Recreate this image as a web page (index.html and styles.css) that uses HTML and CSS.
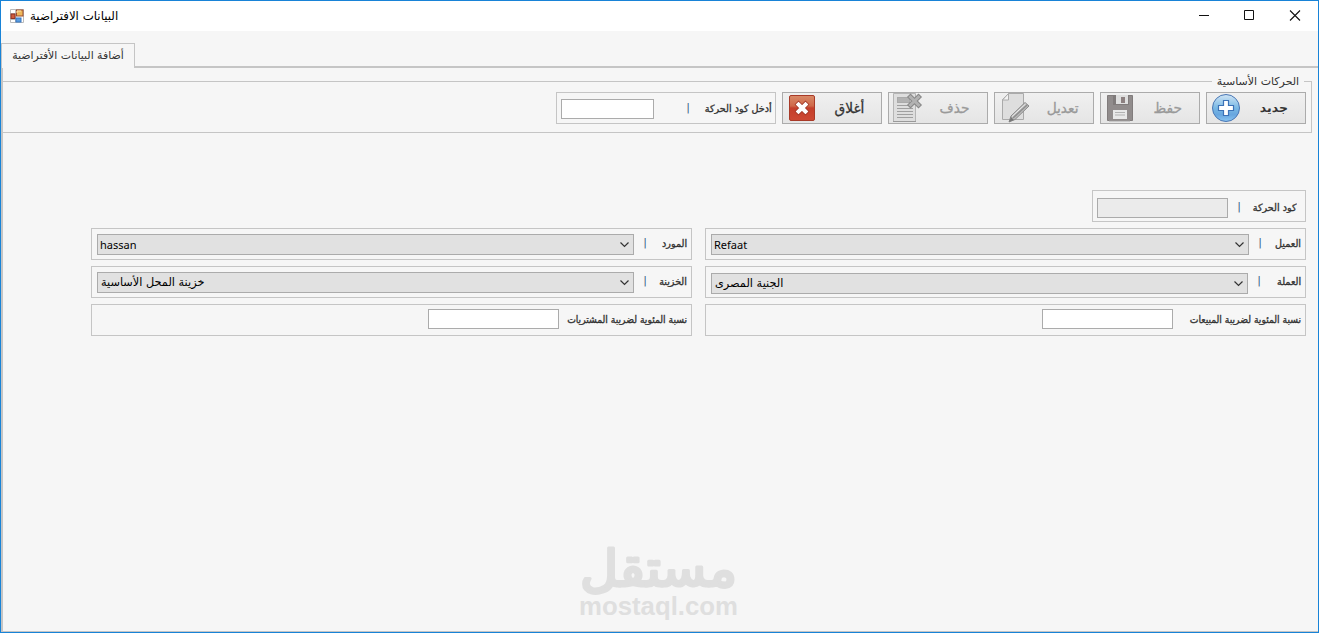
FILE: index.html
```html
<!DOCTYPE html>
<html lang="ar">
  <head>
    <meta charset="utf-8">
    <title>البيانات الافتراضية</title>
    <link rel="stylesheet" href="styles.css">
  </head>
  <body>
    <div class="window">
      <header class="title-bar">
        <svg class="app-icon" width="14" height="14" viewBox="0 0 14 14">
          <path d="M.5 .5h13v13H.5zM5.500 0v14M0 4.500h6M0 10.500h6" fill="#fff" stroke="#bbb"/>
          <rect x="6.500" y="1" width="6.500" height="6" fill="#edb75a" stroke="#9c4b2c"/>
          <path d="M7 4V2h4" fill="none" stroke="#ffe3ae"/>
          <rect x="1" y="5" width="4" height="4.500" fill="#cf5b3c" stroke="#8f3325"/>
          <rect x="6" y="9" width="5" height="4" fill="#5b9de0" stroke="#3976c0"/>
        </svg>
        <span class="window-title" dir="rtl">البيانات الافتراضية</span>
        <svg class="window-buttons" width="102" height="11" viewBox="0 0 102 11">
          <path d="M0 5.500h10M45.500 .5h9v9h-9z" fill="none" stroke="#111"/>
          <path d="M91 .5l10 10M101 .5l-10 10" fill="none" stroke="#111" stroke-width="1.100"/>
        </svg>
      </header>

      <div class="tabs">
        <div class="tab" dir="rtl">أضافة البيانات الأفتراضية</div>
      </div>

      <main class="page">
        <section class="group">
          <span class="group-title" dir="rtl">الحركات الأساسية</span>
          <div class="toolbar">
            <div class="search">
              <input class="search-input" type="text">
              <span class="separator search-separator">|</span>
              <span class="label" dir="rtl">أدخل كود الحركة</span>
            </div>

            <button class="tool-button">
              <svg class="tool-icon" width="32" height="30" viewBox="0 0 32 30">
                <defs>
                  <linearGradient id="red" x2="0" y2="1">
                    <stop offset="0" stop-color="#d98a68"/>
                    <stop offset=".42" stop-color="#cf6849"/>
                    <stop offset=".5" stop-color="#c43f2b"/>
                    <stop offset="1" stop-color="#cd4934"/>
                  </linearGradient>
                </defs>
                <rect x="4.500" y="2.500" width="25" height="25" rx="1.500" fill="url(#red)" stroke="#a83a28"/>
                <path d="M13.500 11.500l7 7M20.500 11.500l-7 7" stroke="#9f3525" stroke-width="5.500" stroke-linecap="square"/>
                <path d="M13.500 11.500l7 7M20.500 11.500l-7 7" stroke="#fff" stroke-width="4" stroke-linecap="square"/>
              </svg>
              <span class="tool-text close-text">أغلاق</span>
            </button>

            <button class="tool-button disabled">
              <svg class="tool-icon" width="32" height="30" viewBox="0 0 32 30">
                <path d="M2.500 .5h22v28h-22z" fill="#dedede" stroke="#b5b5b5"/>
                <path d="M2 28.500h23" stroke="#999"/>
                <rect x="6.500" y="4.500" width="12" height="5" fill="#b2b2b2" stroke="#aaa"/>
                <path d="M6 12.500h16M6 15.500h16M6 18.500h16M6 21.500h16M6 24.500h16" stroke="#a0a0a0"/>
                <path d="M19.500 4l8 8M27.500 4l-8 8" stroke="#888" stroke-width="5" stroke-linecap="square"/>
                <path d="M19.500 4l8 8M27.500 4l-8 8" stroke="#b2b2b2" stroke-width="3" stroke-linecap="square"/>
              </svg>
              <span class="tool-text delete-text">حذف</span>
            </button>

            <button class="tool-button disabled">
              <svg class="tool-icon" width="32" height="30" viewBox="0 0 32 30">
                <path d="M11.500 .5h15v26h-21v-20z" fill="#dedede" stroke="#aaa"/>
                <path d="M11.500 .5v6.500h-6z" fill="#f3f3f3" stroke="#aaa"/>
                <path d="M12 29l2-6 14-13.500 4 3.500-14 13.500z" fill="#bbb" stroke="#8b8b8b"/>
                <path d="M15 23.500l13.500-12.500" stroke="#eee"/>
                <path d="M16 25l14-13" stroke="#8f8f8f" stroke-width="1.500"/>
                <path d="M12 29l2-5 3 3z" fill="#777"/>
              </svg>
              <span class="tool-text edit-text">تعديل</span>
            </button>

            <button class="tool-button disabled">
              <svg class="tool-icon" width="32" height="30" viewBox="0 0 32 30">
                <path d="M4.500 2.500h25v25h-25z" fill="#918c8c" stroke="#817c7c"/>
                <path d="M10 2h16v10H10z" fill="#807b7b"/>
                <path d="M13 2h12v9H13z" fill="#dedede"/>
                <path d="M18 4h4v6h-4z" fill="#8c8080"/>
                <path d="M10 17h14v9H10z" fill="#e8e8e8"/>
                <path d="M12 19.500h10M12 22h10" stroke="#b2b2b2"/>
                <path d="M6 28h21" stroke="#aaa"/>
              </svg>
              <span class="tool-text save-text">حفظ</span>
            </button>

            <button class="tool-button">
              <svg class="tool-icon" width="32" height="30" viewBox="0 0 32 30">
                <defs>
                  <linearGradient id="blue" x2="0" y2="1">
                    <stop offset="0" stop-color="#d0e5f5"/>
                    <stop offset=".5" stop-color="#79b8e4"/>
                    <stop offset=".75" stop-color="#68a6df"/>
                    <stop offset="1" stop-color="#8bc6f2"/>
                  </linearGradient>
                </defs>
                <circle cx="17" cy="15" r="13.500" fill="url(#blue)" stroke="#4976b4"/>
                <path d="M14.500 7.500h5v5h5v5h-5v5h-5v-5h-5v-5h5z" fill="#fff" stroke="#3c72b7" stroke-width="1.200"/>
              </svg>
              <span class="tool-text">جديد</span>
            </button>
          </div>
        </section>

        <form class="form">
          <div class="field code-field">
            <input class="text-input code-input" type="text" disabled>
            <span class="separator">|</span>
            <span class="label" dir="rtl">كود الحركة</span>
          </div>

          <div class="field">
            <div class="combo">
              <span class="latin">hassan</span>
              <svg class="arrow" width="9" height="6" viewBox="0 0 9 6"><path d="M.5 .5l4 4 4-4"/></svg>
            </div>
            <span class="separator">|</span>
            <span class="label" dir="rtl">المورد</span>
          </div>
          <div class="field">
            <div class="combo wide">
              <span class="latin">Refaat</span>
              <svg class="arrow" width="9" height="6" viewBox="0 0 9 6"><path d="M.5 .5l4 4 4-4"/></svg>
            </div>
            <span class="separator">|</span>
            <span class="label" dir="rtl">العميل</span>
          </div>

          <div class="field">
            <div class="combo">
              <span class="combo-value" dir="rtl">خزينة المحل الأساسية</span>
              <svg class="arrow" width="9" height="6" viewBox="0 0 9 6"><path d="M.5 .5l4 4 4-4"/></svg>
            </div>
            <span class="separator">|</span>
            <span class="label" dir="rtl">الخزينة</span>
          </div>
          <div class="field">
            <div class="combo currency">
              <span class="combo-value" dir="rtl">الجنية المصرى</span>
              <svg class="arrow" width="9" height="6" viewBox="0 0 9 6"><path d="M.5 .5l4 4 4-4"/></svg>
            </div>
            <span class="separator">|</span>
            <span class="label" dir="rtl">العملة</span>
          </div>

          <div class="field">
            <input class="text-input tax-input" type="text">
            <span class="label tax-label" dir="rtl">نسبة المئوية لضريبة المشتريات</span>
          </div>
          <div class="field">
            <input class="text-input tax-input" type="text">
            <span class="label tax-label" dir="rtl">نسبة المئوية لضريبة المبيعات</span>
          </div>
        </form>
      </main>

      <div class="watermark">
        <svg width="166" height="56" viewBox="0 0 166 56">
          <text class="mark-arabic" x="5" y="45" textLength="157" lengthAdjust="spacingAndGlyphs">مستقل</text>
        </svg>
        <svg width="166" height="28" viewBox="0 0 166 28">
          <text class="mark-latin" x="4" y="18" textLength="159" lengthAdjust="spacingAndGlyphs">mostaql.com</text>
        </svg>
      </div>
    </div>
  </body>
</html>
```
FILE: styles.css
```css
* {
  box-sizing: border-box;
}

body {
  margin: 0;
  font-family: "DejaVu Sans", sans-serif;
  font-size: 11px;
  color: #333;
}

.window {
  position: relative;
  display: flex;
  flex-direction: column;
  height: 633px;
  border: 1px solid #1883d7;
  background-color: #f6f6f6;
  overflow: hidden;
}

.title-bar {
  display: flex;
  align-items: center;
  height: 30px;
  padding: 0 17px 0 9px;
  background-color: white;
}

.window-title {
  margin-left: 6px;
  font-size: 11.8px;
  color: black;
  white-space: nowrap;
}

.window-buttons {
  margin-left: auto;
  margin-bottom: 1px;
}

.tabs {
  display: flex;
  height: 37px;
  padding-top: 12px;
  border-bottom: 2px solid #c5c5c5;
}

.tab {
  width: 134px;
  height: 25px;
  border: 1px solid #c5c5c5;
  border-bottom: 0;
  background-color: #f6f6f6;
  font-size: 10.9px;
  line-height: 24px;
  text-align: center;
  white-space: nowrap;
}

.page {
  flex: 1;
  padding: 13px 6px 0 0;
  border-left: 2px solid #c5c5c5;
  border-bottom: 1px solid #c5c5c5;
}

.group {
  position: relative;
  height: 52px;
  border: 1px solid #c5c5c5;
  border-left: 0;
}

.group-title {
  position: absolute;
  top: -8px;
  right: 7px;
  width: 92px;
  background-color: #f6f6f6;
  font-size: 11px;
  line-height: 16px;
  text-align: center;
  white-space: nowrap;
}

.toolbar {
  display: flex;
  justify-content: flex-end;
  gap: 6px;
  padding: 10px 5px 0 0;
}

.search {
  display: flex;
  align-items: center;
  width: 220px;
  height: 32px;
  padding: 0 3px 0 4px;
  border: 1px solid #c5c5c5;
}

.search-input {
  width: 93px;
  height: 20px;
  margin: 2px 0 0;
  border: 1px solid #ababab;
}

.tool-button {
  display: flex;
  align-items: center;
  width: 100px;
  height: 32px;
  padding: 0 17px 0 2px;
  border: 1px solid #ababab;
  background: linear-gradient(#f0f0f0, #e5e5e5);
  color: #333;
  font-family: "DejaVu Sans", sans-serif;
  font-size: 12.5px;
  font-weight: bold;
}

.tool-icon {
  flex: none;
}

.tool-text {
  margin-left: auto;
  line-height: 18px;
  white-space: nowrap;
}

.close-text,
.delete-text,
.edit-text,
.save-text {
  font-size: 14px;
  font-weight: normal;
  transform: scaleX(0.98);
  transform-origin: right;
  -webkit-text-stroke: 0.3px;
}

.edit-text {
  margin-right: -2px;
}

.disabled {
  color: #999;
}

.form {
  display: grid;
  grid-template-columns: 601px 601px;
  justify-content: end;
  gap: 6px 13px;
  margin-top: 57px;
  padding-right: 6px;
}

.field {
  display: flex;
  height: 32px;
  padding: 5px 4px 0 5px;
  border: 1px solid #c5c5c5;
}

.code-field {
  grid-column: 2;
  justify-self: end;
  width: 214px;
  padding: 7px 9px 0 4px;
}

.text-input {
  flex: none;
  width: 131px;
  height: 20px;
  padding: 0;
  border: 1px solid #ababab;
  background-color: white;
}

.code-input {
  background-color: #ebebeb;
}

.tax-input {
  margin: -1px 0 0 331px;
}

.combo {
  display: flex;
  flex: none;
  align-items: center;
  width: 537px;
  height: 21px;
  padding: 0 4px 0 2px;
  border: 1px solid #ababab;
  background-color: #e1e1e1;
  color: black;
}

.wide {
  width: 538px;
}

.currency {
  margin-top: 1px;
}

.latin {
  font-family: "Noto Sans", sans-serif;
  font-size: 11px;
  line-height: 18px;
}

.combo-value {
  padding-left: 1px;
  font-size: 11.3px;
  white-space: nowrap;
}

.arrow {
  margin-left: auto;
  fill: none;
  stroke: #333;
  stroke-width: 1.2;
}

.separator {
  flex: none;
  width: 10px;
  margin-left: 6px;
  color: #3b5f85;
  font-size: 11px;
  line-height: 18px;
  text-align: center;
}

.search-separator {
  margin-left: 29px;
}

.label {
  margin-left: auto;
  font-size: 10px;
  line-height: 19px;
  white-space: nowrap;
  transform: scaleX(0.96);
  transform-origin: right;
  -webkit-text-stroke: 0.35px;
}

.tax-label {
  margin-left: -10px;
  margin-right: 0;
  flex: 1;
  transform: scaleX(0.92);
}

.watermark {
  position: absolute;
  top: 540px;
  left: 574px;
  display: flex;
  flex-direction: column;
}

.watermark svg {
  overflow: visible;
  fill: #dfdfdf;
}

.mark-arabic {
  font-family: "DejaVu Sans", sans-serif;
  font-size: 50px;
  stroke: #dfdfdf;
  stroke-width: 3;
  stroke-linecap: round;
  stroke-linejoin: round;
}

.mark-latin {
  font-family: "Liberation Sans", sans-serif;
  font-size: 26px;
  font-weight: bold;
}
```
